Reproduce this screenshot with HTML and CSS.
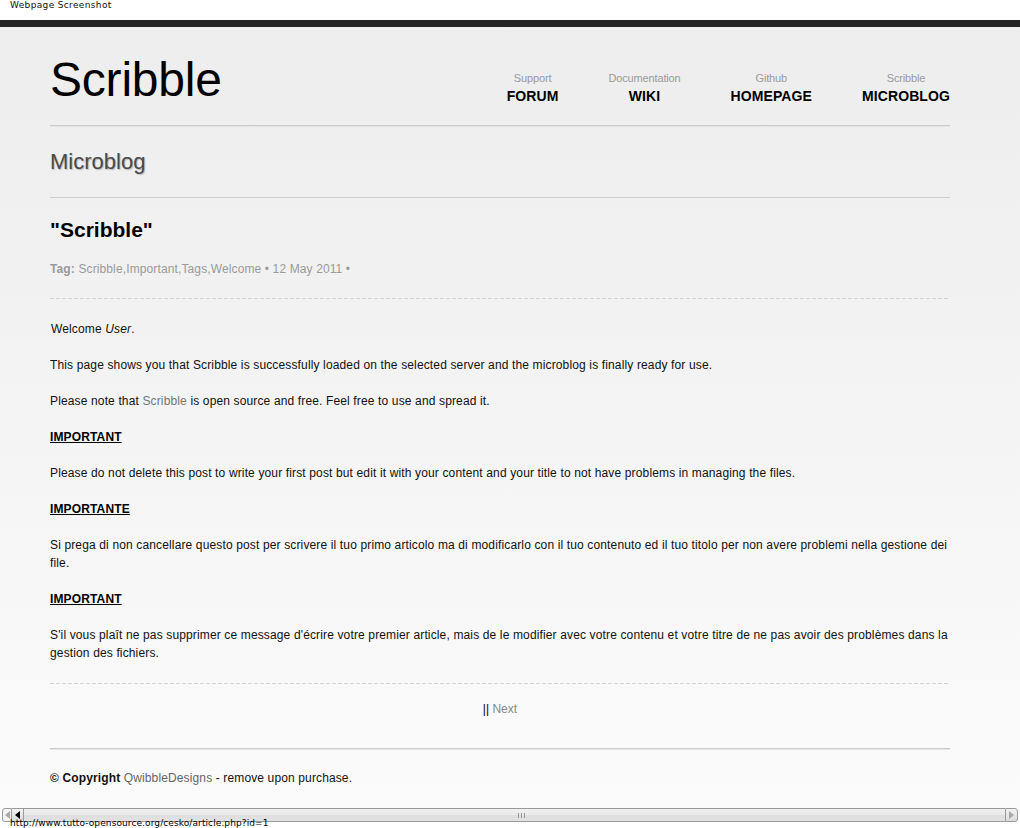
FILE: index.html
```html
<!DOCTYPE html>
<html lang="en">
<head>
<meta charset="utf-8">
<title>Scribble - Microblog</title>
<link rel="stylesheet" href="styles.css">
</head>
<body>
<div class="shot-bar">Webpage Screenshot</div>
<div class="topline"></div>
<div class="page">
  <div class="wrap">
    <header class="header">
      <div class="logo">Scribble</div>
      <nav class="nav">
        <a class="nav-item" href="#"><span class="nav-sub">Support</span><span class="nav-main">FORUM</span></a>
        <a class="nav-item" href="#"><span class="nav-sub">Documentation</span><span class="nav-main">WIKI</span></a>
        <a class="nav-item" href="#"><span class="nav-sub">Github</span><span class="nav-main">HOMEPAGE</span></a>
        <a class="nav-item" href="#"><span class="nav-sub">Scribble</span><span class="nav-main">MICROBLOG</span></a>
      </nav>
    </header>
    <h1 class="section-title">Microblog</h1>
    <article class="post">
      <h2 class="post-title">"Scribble"</h2>
      <div class="post-meta"><b>Tag:</b> <a href="#">Scribble</a>,<a href="#">Important</a>,<a href="#">Tags</a>,<a href="#">Welcome</a> &bull; 12 May 2011 &bull;</div>
      <div class="post-body">
        <p class="welcome">Welcome <em>User</em>.</p>
        <p>This page shows you that Scribble is successfully loaded on the selected server and the microblog is finally ready for use.</p>
        <p>Please note that <a href="#">Scribble</a> is open source and free. Feel free to use and spread it.</p>
        <p><b class="imp">IMPORTANT</b></p>
        <p>Please do not delete this post to write your first post but edit it with your content and your title to not have problems in managing the files.</p>
        <p><b class="imp">IMPORTANTE</b></p>
        <p>Si prega di non cancellare questo post per scrivere il tuo primo articolo ma di modificarlo con il tuo contenuto ed il tuo titolo per non avere problemi nella gestione dei file.</p>
        <p><b class="imp">IMPORTANT</b></p>
        <p>S'il vous plaît ne pas supprimer ce message d'écrire votre premier article, mais de le modifier avec votre contenu et votre titre de ne pas avoir des problèmes dans la gestion des fichiers.</p>
      </div>
      <div class="pager">|| <a href="#">Next</a></div>
    </article>
    <footer class="footer"><b>&copy; Copyright</b> <a href="#">QwibbleDesigns</a> - remove upon purchase.</footer>
  </div>
</div>
<div class="chrome">
  <div class="hscroll">
    <span class="sb-btn sb-dis"><span class="tri-l grey"></span></span>
    <span class="sb-btn"><span class="tri-l"></span></span>
    <span class="sb-thumb"><span class="grip"></span></span>
    <span class="sb-btn sb-right"><span class="tri-r grey"></span></span>
  </div>
  <div class="status">http://www.tutto-opensource.org/cesko/article.php?id=1</div>
</div>
</body>
</html>
```

FILE: styles.css
```css
html, body {
  margin: 0;
  padding: 0;
}
body {
  font-family: "Liberation Sans", Arial, sans-serif;
  font-size: 12px;
  color: #111;
  background: #fff;
  height: 828px;
  overflow: hidden;
}
a {
  text-decoration: none;
}
.shot-bar {
  height: 20px;
  background: #fff;
  font-family: "DejaVu Sans", sans-serif;
  font-size: 9px;
  letter-spacing: 0.35px;
  line-height: 10px;
  padding-left: 10px;
  color: #111;
  box-sizing: border-box;
}
.topline {
  height: 7px;
  background: #222;
}
.page {
  background: linear-gradient(to bottom, #ededed 0px, #f3f3f3 350px, #fafafa 700px, #fbfbfb 800px);
  height: 801px;
}
.wrap {
  width: 900px;
  margin-left: 50px;
}
.header {
  display: flex;
  justify-content: space-between;
  align-items: flex-start;
  padding-top: 29px;
  padding-bottom: 19px;
  border-bottom: 1px solid #cbcbcb;
  box-shadow: 0 1px 0 #e4e4e4;
}
.logo {
  font-size: 48px;
  line-height: 48px;
  color: #000;
  letter-spacing: -0.2px;
}
.nav {
  display: flex;
  gap: 50px;
  margin-top: 14px;
}
.nav-item {
  display: flex;
  flex-direction: column;
  align-items: center;
}
.nav-sub {
  font-size: 11px;
  line-height: 16px;
  letter-spacing: -0.15px;
  color: #9a9a9a;
}
.nav-main {
  font-size: 14px;
  line-height: 20px;
  font-weight: bold;
  letter-spacing: 0.1px;
  color: #000;
}
.section-title {
  margin: 23px 0 0;
  padding-bottom: 22px;
  font-size: 22px;
  line-height: 26px;
  font-weight: normal;
  color: #4a4a4a;
  text-shadow: 1px 1px 1px #b5b5b5;
  border-bottom: 1px solid #cfcfcf;
}
.post-title {
  margin: 20px 0 0;
  font-size: 21px;
  line-height: 24px;
  font-weight: bold;
  color: #000;
}
.post-meta {
  margin-top: 19px;
  line-height: 16px;
  letter-spacing: 0.12px;
  color: #9a9a9a;
  padding-bottom: 22px;
  background: repeating-linear-gradient(to right, #d2d2d2 0 4px, transparent 4px 6px) bottom left / 100% 1px no-repeat;
}
.post-meta b {
  color: #999;
}
.post-meta a {
  color: #9a9a9a;
}
.post-body {
  padding-top: 21px;
  padding-bottom: 4px;
  letter-spacing: 0.14px;
  background: repeating-linear-gradient(to right, #d2d2d2 0 4px, transparent 4px 6px) bottom left / 100% 1px no-repeat;
}
.post-body p {
  margin: 0 0 18px;
  line-height: 18px;
}
.post-body .welcome {
  padding-left: 1px;
}
.post-body a {
  color: #777;
}
.imp {
  text-decoration: underline;
  color: #000;
}
.pager {
  text-align: center;
  margin-top: 16px;
  line-height: 18px;
  padding-bottom: 30px;
  border-bottom: 1px solid #cbcbcb;
  box-shadow: 0 1px 0 #e4e4e4;
  color: #000;
}
.pager a {
  color: #888;
}
.footer {
  margin-top: 20px;
  line-height: 18px;
  letter-spacing: 0.13px;
  color: #111;
}
.footer a {
  color: #666;
}
.chrome {
  position: fixed;
  left: 0;
  top: 808px;
  width: 1020px;
  height: 20px;
  background: #fff;
}
.hscroll {
  display: flex;
  height: 14px;
  box-sizing: border-box;
  padding: 0 2px 0 2px;
}
.sb-btn {
  width: 10px;
  height: 14px;
  box-sizing: border-box;
  border: 1px solid #9a9a9a;
  border-radius: 3px 0 0 3px;
  background: linear-gradient(#f2f2f2, #dcdcdc);
  display: flex;
  align-items: center;
  justify-content: center;
}
.sb-btn + .sb-btn {
  width: 12px;
  border-radius: 0;
  border-left: none;
}
.sb-dis {
  background: #f4f4f4;
}
.sb-right {
  width: 13px !important;
  border-radius: 0 3px 3px 0 !important;
  border-left: 1px solid #9a9a9a !important;
}
.sb-thumb {
  flex: 1;
  height: 14px;
  box-sizing: border-box;
  border-top: 1px solid #9a9a9a;
  border-bottom: 1px solid #9a9a9a;
  background: linear-gradient(#f0f0f0 0%, #eaeaea 50%, #dedede 55%, #e2e2e2 100%);
  display: flex;
  align-items: center;
  justify-content: center;
}
.grip {
  width: 7px;
  height: 5px;
  margin-left: 14px;
  background: repeating-linear-gradient(to right, #999 0 1px, transparent 1px 3px);
}
.tri-l {
  width: 0;
  height: 0;
  border-top: 4px solid transparent;
  border-bottom: 4px solid transparent;
  border-right: 5px solid #000;
}
.tri-r {
  width: 0;
  height: 0;
  border-top: 4px solid transparent;
  border-bottom: 4px solid transparent;
  border-left: 5px solid #000;
}
.tri-l.grey {
  border-right-color: #a8a8a8;
}
.tri-r.grey {
  border-left-color: #a8a8a8;
}
.status {
  position: absolute;
  left: 10px;
  top: 10px;
  font-family: "DejaVu Sans", sans-serif;
  font-size: 9px;
  letter-spacing: 0.1px;
  line-height: 10px;
  color: #000;
}
```
